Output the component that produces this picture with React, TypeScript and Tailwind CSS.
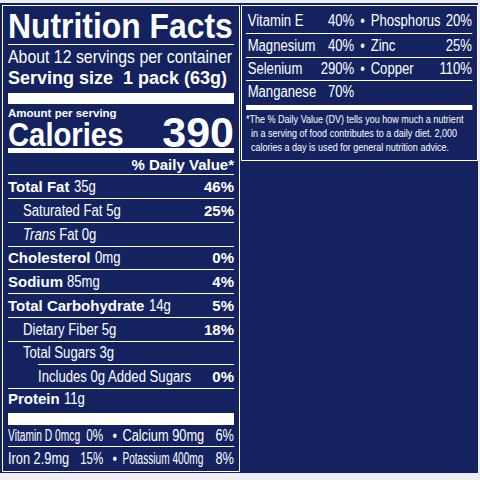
import React from "react";

const SANS = "font-['Liberation_Sans',Arial,sans-serif]";

type NRow = {
  b?: string;
  r?: string;
  p?: string;
  trans?: boolean;
  wrap: string;
  cls: string;
};

const rows: NRow[] = [
  { b: "Total Fat", r: "35g", p: "46%", wrap: "", cls: "h-[23px] leading-[23px]" },
  { r: "Saturated Fat 5g", p: "25%", wrap: "", cls: "h-[23px] leading-[23px] pl-[15px]" },
  { trans: true, wrap: "", cls: "h-[23px] leading-[23px] pl-[15px]" },
  { b: "Cholesterol", r: "0mg", p: "0%", wrap: "", cls: "h-[22px] leading-[22px]" },
  { b: "Sodium", r: "85mg", p: "4%", wrap: "", cls: "h-[23px] leading-[23px]" },
  { b: "Total Carbohydrate", r: "14g", p: "5%", wrap: "", cls: "h-[23px] leading-[23px]" },
  { r: "Dietary Fiber 5g", p: "18%", wrap: "", cls: "h-[23px] leading-[23px] pl-[15px]" },
  { r: "Total Sugars 3g", wrap: "", cls: "h-[22px] leading-[22px] pl-[15px]" },
  { r: "Includes 0g Added Sugars", p: "0%", wrap: "ml-[30px]", cls: "h-[23px] leading-[23px]" },
  { b: "Protein", r: "11g", wrap: "", cls: "h-[24px] leading-[20px]" },
];

function Narrow({ children }: { children: React.ReactNode }) {
  return <span className="inline-block origin-left scale-x-[0.82] text-[16px]">{children}</span>;
}

function NutrientRow({ row }: { row: NRow }) {
  return (
    <div className={`border-t border-white ${row.wrap}`}>
      <div className={`flex whitespace-nowrap ${row.cls}`}>
        <div className="flex-1 min-w-0">
          {row.b && <span className="font-bold text-[15px]">{row.b} </span>}
          {row.trans ? (
            <Narrow>
              <span className="italic">Trans</span> Fat 0g
            </Narrow>
          ) : (
            row.r && <Narrow>{row.r}</Narrow>
          )}
        </div>
        {row.p && <span className="shrink-0 font-bold text-[15px]">{row.p}</span>}
      </div>
    </div>
  );
}

function LeftPanel() {
  return (
    <div className="w-[238px] h-[467px] border border-white px-[5px] pt-[2px] flex flex-col shrink-0">
      <div className="h-[36px] leading-[36px] text-[35px] font-bold whitespace-nowrap">
        <span className="inline-block origin-left scale-x-[0.91]">Nutrition Facts</span>
      </div>
      <div className="h-px bg-white" />
      <div className="h-[24px] leading-[24px] text-[19px] whitespace-nowrap">
        <span className="inline-block origin-left scale-x-[0.835]">About 12 servings per container</span>
      </div>
      <div className="h-[24px] leading-[18px] text-[18px] font-bold whitespace-nowrap">
        Serving size{"\u00a0\u00a0"}1 pack (63g)
      </div>
      <div className="h-[11px] bg-white" />
      <div className="h-[44px] flex justify-between font-bold">
        <div className="pt-[3px]">
          <div className="text-[11.5px] leading-[13px] whitespace-nowrap">Amount per serving</div>
          <div className="text-[34px] leading-[28px] whitespace-nowrap">
            <span className="inline-block origin-left scale-x-[0.86]">Calories</span>
          </div>
        </div>
        <div className="self-end text-[43px] leading-[32px]">390</div>
      </div>
      <div className="h-[5px] bg-white" />
      <div className="h-[21px] pt-[3px] leading-[18px] text-right text-[15px] font-bold">
        % Daily Value*
      </div>
      {rows.map((r, i) => (
        <NutrientRow key={i} row={r} />
      ))}
      <div className="h-[12px] bg-white" />
      <div className="w-[282.5px] origin-left scale-x-[0.8] text-[16px] whitespace-nowrap">
        <div className="h-[21px] leading-[21px] grid grid-cols-[119px_24px_minmax(0,1fr)_auto]">
          <div className="flex justify-between min-w-0">
            <span className="min-w-0 inline-block origin-left scale-x-[0.8]">Vitamin D 0mcg</span>
            <span className="shrink-0 inline-block origin-right scale-x-[0.92]">0%</span>
          </div>
          <div className="pl-[5px] text-center">•</div>
          <div className="min-w-0">Calcium 90mg</div>
          <div>6%</div>
        </div>
        <div className="h-px bg-white" />
        <div className="h-[24px] leading-[24px] grid grid-cols-[119px_24px_minmax(0,1fr)_auto]">
          <div className="flex justify-between min-w-0">
            <span className="min-w-0">Iron 2.9mg</span>
            <span className="shrink-0 inline-block origin-right scale-x-[0.9]">15%</span>
          </div>
          <div className="pl-[5px] text-center">•</div>
          <div className="min-w-0">
            <span className="inline-block origin-left scale-x-[0.79]">Potassium 400mg</span>
          </div>
          <div>8%</div>
        </div>
      </div>
    </div>
  );
}

type MRow = { a: string; ap: string; c?: string; cp?: string; cls: string };

const minerals: MRow[] = [
  { a: "Vitamin E", ap: "40%", c: "Phosphorus", cp: "20%", cls: "h-[27px] pt-[3px] leading-[24px]" },
  { a: "Magnesium", ap: "40%", c: "Zinc", cp: "25%", cls: "h-[23px] leading-[23px]" },
  { a: "Selenium", ap: "290%", c: "Copper", cp: "110%", cls: "h-[22px] leading-[22px]" },
  { a: "Manganese", ap: "70%", cls: "h-[24px] leading-[22px]" },
];

function RightPanel() {
  return (
    <div className="ml-[1px] w-[237px] h-[156px] border border-white pl-[4px] pr-[5px] shrink-0">
      <div className="w-[275.6px] origin-left scale-x-[0.82] flex flex-col">
        {minerals.map((m, i) => (
          <div key={i} className={i > 0 ? "border-t border-white" : ""}>
            <div className={`text-[16px] grid grid-cols-[132px_20px_minmax(0,1fr)_auto] whitespace-nowrap ${m.cls}`}>
              <div className="flex justify-between pl-[2px]">
                <span>{m.a}</span>
                <span>{m.ap}</span>
              </div>
              <div className="text-center">{m.c ? "•" : ""}</div>
              <div>{m.c ?? ""}</div>
              <div>{m.cp ?? ""}</div>
            </div>
          </div>
        ))}
        <div className="h-[5px] bg-white" />
        <div className="h-[50px] pt-[2px] text-[11px] leading-[14px] pl-[6px] indent-[-6px] whitespace-nowrap">
          *The % Daily Value (DV) tells you how much a nutrient
          <br />
          in a serving of food contributes to a daily diet. 2,000
          <br />
          calories a day is used for general nutrition advice.
        </div>
      </div>
    </div>
  );
}

export default function App() {
  return (
    <div className={`${SANS} w-[480px] h-[480px] bg-[#eceef4] pt-[3px] pr-[2px] overflow-hidden`}>
      <div className="h-[470px] bg-[#14235f] text-white flex items-start pt-[2px] pl-[2px]">
        <LeftPanel />
        <RightPanel />
      </div>
    </div>
  );
}
